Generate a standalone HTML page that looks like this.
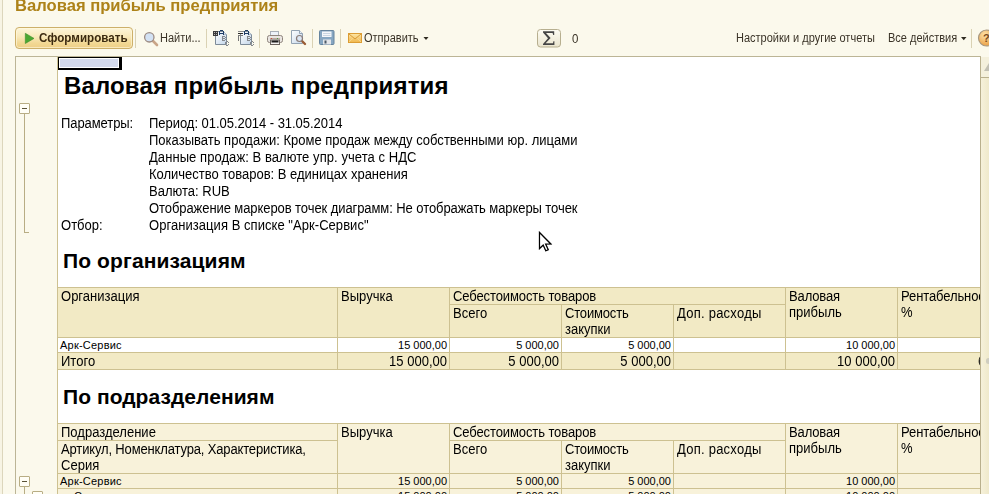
<!DOCTYPE html>
<html><head><meta charset="utf-8">
<style>
html,body{margin:0;padding:0;overflow:hidden;}
body{width:989px;height:494px;overflow:hidden;position:relative;background:#fbf9ec;font-family:"Liberation Sans",sans-serif;font-size:13px;color:#000;}
.abs{position:absolute;white-space:nowrap;}
.t13{font-size:14px;line-height:17px;transform:scaleX(0.93);transform-origin:0 0;}
.num.t13{transform-origin:100% 0;}
.t11{font-size:11px;line-height:15px;}
.l16{line-height:16px;}
.hl{position:absolute;height:1px;background:#cdc191;}
.vl{position:absolute;width:1px;background:#cdc191;}
.bg1{position:absolute;background:#f2eac5;}
.bg2{position:absolute;background:#f8f2da;}
.num{position:absolute;text-align:right;white-space:nowrap;}
.tb{font-size:12px;color:#3a3327;position:absolute;white-space:nowrap;line-height:14px;transform:scaleX(0.917);transform-origin:0 0;}
.sep{position:absolute;width:1px;height:19px;top:29px;background:#dad2b4;}
.tog{position:absolute;width:9px;height:9px;border:1px solid #b8ad84;background:#fffef6;border-radius:1px;}
.tog:after{content:"";position:absolute;left:2px;top:4px;width:5px;height:1px;background:#5a5238;}
.tl{position:absolute;background:#b8ad84;}
svg{position:absolute;overflow:visible;}
</style></head><body>
<!-- window left edge -->
<div class="abs" style="left:0;top:0;width:2px;height:494px;background:#f7f4e4"></div><div class="abs" style="left:2px;top:0;width:1px;height:494px;background:#dcd6bc"></div>
<!-- title -->
<div class="abs" style="left:15px;top:-4px;font-size:16px;font-weight:bold;color:#ad8218;line-height:20px;transform:scaleX(1.037);transform-origin:0 0;">Валовая прибыль предприятия</div>

<!-- toolbar -->
<div id="tbar">
<div class="abs" style="left:15px;top:27px;width:116px;height:20px;border:1px solid #cdb06a;border-radius:4px;background:linear-gradient(#fdf5d9,#f8e8b8 45%,#f2d894 75%,#eecf86);box-shadow:inset 0 0 0 1px rgba(255,250,225,0.6);"></div>
<svg style="left:25px;top:33px" width="10" height="12"><polygon points="0.3,0.3 9,5.4 0.3,10.5" fill="#4aa832" stroke="#3c8c2a" stroke-width="0.6"/></svg>
<div class="tb" style="left:39px;top:31px;font-weight:bold;color:#3b2a10;font-size:12.3px;transform:scaleX(0.945)">Сформировать</div>
<div class="sep" style="left:135px"></div>
<div class="tb" style="left:160px;top:31px;">Найти...</div>
<div class="sep" style="left:206px"></div>
<div class="sep" style="left:259px"></div>
<div class="sep" style="left:312px"></div>
<div class="sep" style="left:340px"></div>
<div class="tb" style="left:364px;top:31px;">Отправить</div>
<div class="tb" style="left:572px;top:32px;font-size:12.5px;">0</div>
<div class="tb" style="left:736px;top:31px;">Настройки и другие отчеты</div>
<div class="tb" style="left:888px;top:31px;">Все действия</div>
<div class="sep" style="left:971px"></div>
</div>


<!-- icons -->
<svg id="icons" style="left:0;top:0" width="989" height="60" shape-rendering="auto" font-family="Liberation Sans, sans-serif">
<defs>
<linearGradient id="pg" x1="0" y1="0" x2="1" y2="1"><stop offset="0" stop-color="#ffffff"/><stop offset="1" stop-color="#c3d6ea"/></linearGradient>
<linearGradient id="env" x1="0" y1="0" x2="0" y2="1"><stop offset="0" stop-color="#fde7a6"/><stop offset="1" stop-color="#efb64c"/></linearGradient>
<linearGradient id="sg" x1="0" y1="0" x2="0" y2="1"><stop offset="0" stop-color="#fdfcf4"/><stop offset="1" stop-color="#e9e4cd"/></linearGradient>
<radialGradient id="hg" cx="0.4" cy="0.3" r="0.8"><stop offset="0" stop-color="#fde1a8"/><stop offset="1" stop-color="#e7983a"/></radialGradient>
</defs>
<!-- magnifier (find) -->
<line x1="153" y1="41" x2="157" y2="45" stroke="#c9a588" stroke-width="2.6" stroke-linecap="round"/>
<circle cx="149.3" cy="37.3" r="4.7" fill="#d3e2f4" stroke="#9c8c84" stroke-width="1.3"/>
<!-- icon 1: copy ABC grid -->
<g id="ic1"><path d="M215.5 33 V44.5 H226.5 V34.5 L223.5 31.5 H218" fill="url(#pg)" stroke="#7d8b98" stroke-width="1"/><path d="M223.5 31.5 V34.5 H226.5" fill="#dfe9f3" stroke="#9fb0c0" stroke-width="0.8"/><rect x="213" y="31" width="5" height="5" fill="#b8b8b8"/><rect x="213" y="31" width="5" height="1" fill="#3a3a3a"/><rect x="213" y="32" width="1" height="1" fill="#3a3a3a"/><rect x="215" y="32" width="1" height="1" fill="#3a3a3a"/><rect x="217" y="32" width="1" height="1" fill="#3a3a3a"/><rect x="213" y="33" width="5" height="1" fill="#3a3a3a"/><rect x="213" y="34" width="1" height="1" fill="#3a3a3a"/><rect x="215" y="34" width="1" height="1" fill="#3a3a3a"/><rect x="217" y="34" width="1" height="1" fill="#3a3a3a"/><rect x="213" y="35" width="5" height="1" fill="#3a3a3a"/><rect x="220" y="30" width="3" height="1" fill="#1f3d66"/><rect x="219" y="31" width="1" height="1" fill="#1f3d66"/><rect x="223" y="31" width="1" height="1" fill="#1f3d66"/><rect x="219" y="32" width="1" height="1" fill="#1f3d66"/><rect x="223" y="32" width="1" height="1" fill="#1f3d66"/><rect x="219" y="33" width="5" height="1" fill="#1f3d66"/><rect x="219" y="34" width="1" height="1" fill="#1f3d66"/><rect x="223" y="34" width="1" height="1" fill="#1f3d66"/><rect x="222" y="36" width="3" height="1" fill="#85888c"/><rect x="222" y="37" width="1" height="1" fill="#85888c"/><rect x="225" y="37" width="1" height="1" fill="#85888c"/><rect x="222" y="38" width="3" height="1" fill="#85888c"/><rect x="222" y="39" width="1" height="1" fill="#85888c"/><rect x="225" y="39" width="1" height="1" fill="#85888c"/><rect x="222" y="40" width="3" height="1" fill="#85888c"/><rect x="226" y="41" width="2" height="1" fill="#85888c"/><rect x="225" y="42" width="1" height="1" fill="#85888c"/><rect x="228" y="42" width="1" height="1" fill="#85888c"/><rect x="225" y="43" width="1" height="1" fill="#85888c"/><rect x="225" y="44" width="1" height="1" fill="#85888c"/><rect x="228" y="44" width="1" height="1" fill="#85888c"/><rect x="226" y="45" width="2" height="1" fill="#85888c"/></g>
<!-- icon 2 -->
<g id="ic2"><path d="M240.5 33 V44.5 H251.5 V34.5 L248.5 31.5 H243" fill="url(#pg)" stroke="#7d8b98" stroke-width="1"/><path d="M248.5 31.5 V34.5 H251.5" fill="#dfe9f3" stroke="#9fb0c0" stroke-width="0.8"/><rect x="238" y="31" width="5" height="1" fill="#8a8a8a"/><rect x="238" y="33" width="5" height="1" fill="#2a2a2a"/><rect x="238" y="35" width="5" height="1" fill="#777"/><rect x="238" y="36" width="1" height="5" fill="#777"/><rect x="245" y="30" width="3" height="1" fill="#1f3d66"/><rect x="244" y="31" width="1" height="1" fill="#1f3d66"/><rect x="248" y="31" width="1" height="1" fill="#1f3d66"/><rect x="244" y="32" width="1" height="1" fill="#1f3d66"/><rect x="248" y="32" width="1" height="1" fill="#1f3d66"/><rect x="244" y="33" width="5" height="1" fill="#1f3d66"/><rect x="244" y="34" width="1" height="1" fill="#1f3d66"/><rect x="248" y="34" width="1" height="1" fill="#1f3d66"/><rect x="247" y="36" width="3" height="1" fill="#85888c"/><rect x="247" y="37" width="1" height="1" fill="#85888c"/><rect x="250" y="37" width="1" height="1" fill="#85888c"/><rect x="247" y="38" width="3" height="1" fill="#85888c"/><rect x="247" y="39" width="1" height="1" fill="#85888c"/><rect x="250" y="39" width="1" height="1" fill="#85888c"/><rect x="247" y="40" width="3" height="1" fill="#85888c"/><rect x="251" y="41" width="2" height="1" fill="#85888c"/><rect x="250" y="42" width="1" height="1" fill="#85888c"/><rect x="253" y="42" width="1" height="1" fill="#85888c"/><rect x="250" y="43" width="1" height="1" fill="#85888c"/><rect x="250" y="44" width="1" height="1" fill="#85888c"/><rect x="253" y="44" width="1" height="1" fill="#85888c"/><rect x="251" y="45" width="2" height="1" fill="#85888c"/></g>
<!-- printer -->
<g id="prn">
<rect x="270.5" y="31.5" width="8" height="5" fill="#eef3f9" stroke="#a9b0b8" stroke-width="1"/>
<rect x="267.5" y="35.5" width="15" height="7" rx="2" fill="#e9e5e1" stroke="#8f857d" stroke-width="1"/>
<rect x="270" y="38" width="10" height="1" fill="#b9a9a0"/>
<rect x="271" y="38" width="1" height="1" fill="#d04a3a"/><rect x="277" y="38" width="1" height="1" fill="#4aa040"/>
<rect x="270.5" y="40" width="9" height="4.5" fill="#f4f2f0" stroke="#6a625c" stroke-width="1"/>
<rect x="271.5" y="40.5" width="7" height="2" fill="#1c1c1c"/>
</g>
<!-- page preview -->
<g id="prev">
<path d="M291.5 30.5 H299.5 L302.5 33.5 V43.5 H291.5 Z" fill="url(#pg)" stroke="#93a3b3" stroke-width="1"/>
<path d="M299.5 30.5 V33.5 H302.5" fill="#eef3f8" stroke="#93a3b3" stroke-width="1"/>
<line x1="302" y1="41" x2="305" y2="44" stroke="#9a5c34" stroke-width="2.4" stroke-linecap="round"/>
<circle cx="299.5" cy="38.5" r="3" fill="#dbe6f4" stroke="#8a7c78" stroke-width="1.2"/>
</g>
<!-- floppy -->
<g id="flop">
<rect x="319.5" y="30.5" width="14.5" height="14" rx="1" fill="#86a6c2" stroke="#66849e" stroke-width="1"/>
<rect x="322" y="31.5" width="9.5" height="5.5" fill="#f3f6fa"/>
<rect x="323" y="33" width="7.5" height="1" fill="#c9d5e2"/><rect x="323" y="35" width="7.5" height="1" fill="#c9d5e2"/>
<rect x="323" y="39.5" width="8" height="5" fill="#e4e6ea"/>
<rect x="324.5" y="40.5" width="2" height="3" fill="#4a5866"/>
</g>
<!-- envelope -->
<g id="envl">
<rect x="348.5" y="33.5" width="13" height="9" fill="url(#env)" stroke="#dc9d34" stroke-width="1"/>
<path d="M349 34 L355 39 L361 34" fill="none" stroke="#d89a36" stroke-width="1"/>
<path d="M349 42 L353 38 M361 42 L357 38" fill="none" stroke="#f7d689" stroke-width="1"/>
</g>
<polygon points="423.5,37 428.5,37 426,40" fill="#2e2a20"/>
<!-- sigma button -->
<rect x="537.5" y="29.5" width="23" height="17.5" rx="3" fill="url(#sg)" stroke="#b7af8f" stroke-width="1"/>
<path d="M543 31.3 H554.2 V35 H553.2 L552.6 32.9 H546 L550.6 38 L545.6 43.2 H553 L553.4 41.2 H554.4 V44.9 H543 V44 L548 38.2 L543 32.4 Z" fill="#454545"/>
<polygon points="961,37 966.5,37 963.75,40.3" fill="#2e2a20"/>
<!-- help -->
<circle cx="986.5" cy="38" r="8" fill="url(#hg)" stroke="#a89880" stroke-width="1.2"/>
<text x="983" y="42" font-size="11" font-weight="bold" fill="#7a4a20">?</text>
</svg>

<!-- document area -->
<div class="abs" style="left:15px;top:56px;width:965px;height:438px;background:#fff;border-left:1px solid #bcb596;border-top:1px solid #bcb596;"></div>
<div class="abs" style="left:16px;top:57px;width:41px;height:437px;background:#fbf9ec;"></div>
<div class="abs" style="left:57px;top:57px;width:1px;height:437px;background:#cdc191;"></div>

<!-- selection -->
<div class="abs" style="left:58px;top:57px;width:60px;height:10px;border:solid #000;border-width:1px 3px 2px 1px;background:#d3d9ec;box-shadow:inset 0 0 0 1px #fff;"></div>

<!-- doc text -->
<div class="abs" style="left:64px;top:72px;font-size:24px;font-weight:bold;line-height:28px;letter-spacing:0.14px;">Валовая прибыль предприятия</div>
<div class="abs t13" style="left:61px;top:115px;letter-spacing:-0.1px;">Параметры:</div>
<div class="abs t13" style="left:149px;top:115px;letter-spacing:-0.05px;">Период: 01.05.2014 - 31.05.2014</div>
<div class="abs t13" style="left:149px;top:132px;">Показывать продажи: Кроме продаж между собственными юр. лицами</div>
<div class="abs t13" style="left:149px;top:149px;letter-spacing:0.06px;">Данные продаж: В валюте упр. учета с НДС</div>
<div class="abs t13" style="left:149px;top:166px;letter-spacing:-0.025px;">Количество товаров: В единицах хранения</div>
<div class="abs t13" style="left:149px;top:183px;">Валюта: RUB</div>
<div class="abs t13" style="left:149px;top:200px;letter-spacing:-0.094px;">Отображение маркеров точек диаграмм: Не отображать маркеры точек</div>
<div class="abs t13" style="left:61px;top:217px;">Отбор:</div>
<div class="abs t13" style="left:149px;top:217px;letter-spacing:0.044px;">Организация В списке "Арк-Сервис"</div>
<div class="abs" style="left:63px;top:248px;font-size:21px;font-weight:bold;line-height:26px;letter-spacing:0.12px;">По организациям</div>
<div class="abs" style="left:63px;top:384px;font-size:21px;font-weight:bold;line-height:26px;letter-spacing:0.05px;">По подразделениям</div>

<!-- TABLE 1 -->
<div id="t1">
<div class="bg1" style="left:58px;top:288px;width:922px;height:49px;"></div>
<div class="bg1" style="left:58px;top:353px;width:922px;height:16px;"></div>
<div class="hl" style="left:57px;top:287px;width:923px;"></div>
<div class="hl" style="left:449px;top:304px;width:337px;"></div>
<div class="hl" style="left:57px;top:337px;width:923px;"></div>
<div class="hl" style="left:57px;top:352px;width:923px;"></div>
<div class="hl" style="left:57px;top:369px;width:923px;"></div>
<div class="vl" style="left:337px;top:287px;height:83px;"></div>
<div class="vl" style="left:449px;top:287px;height:83px;"></div>
<div class="vl" style="left:561px;top:304px;height:66px;"></div>
<div class="vl" style="left:673px;top:304px;height:66px;"></div>
<div class="vl" style="left:785px;top:287px;height:83px;"></div>
<div class="vl" style="left:897px;top:287px;height:83px;"></div>
<div class="abs t13" style="left:61px;top:288px;">Организация</div>
<div class="abs t13" style="left:341px;top:288px;">Выручка</div>
<div class="abs t13" style="left:453px;top:288px;letter-spacing:-0.12px;">Себестоимость товаров</div>
<div class="abs t13" style="left:453px;top:305px;">Всего</div>
<div class="abs t13 l16" style="left:565px;top:305px;"><span style="letter-spacing:-0.2px">Стоимость</span><br>закупки</div>
<div class="abs t13" style="left:677px;top:305px;letter-spacing:0.25px;">Доп. расходы</div>
<div class="abs t13 l16" style="left:789px;top:288px;"><span style="letter-spacing:-0.15px">Валовая</span><br>прибыль</div>
<div class="abs t13 l16" style="left:901px;top:288px;width:85px;overflow:hidden;"><span style="letter-spacing:-0.12px">Рентабельность,</span><br>%</div>
<div class="abs t11" style="left:60px;top:338px;letter-spacing:0.22px;">Арк-Сервис</div>
<div class="num t11" style="left:338px;top:338px;width:109px;">15 000,00</div>
<div class="num t11" style="left:450px;top:338px;width:109px;">5 000,00</div>
<div class="num t11" style="left:562px;top:338px;width:109px;">5 000,00</div>
<div class="num t11" style="left:786px;top:338px;width:109px;">10 000,00</div>
<div class="abs t13" style="left:61px;top:353px;">Итого</div>
<div class="num t13" style="left:338px;top:353px;width:109px;">15 000,00</div>
<div class="num t13" style="left:450px;top:353px;width:109px;">5 000,00</div>
<div class="num t13" style="left:562px;top:353px;width:109px;">5 000,00</div>
<div class="num t13" style="left:786px;top:353px;width:109px;">10 000,00</div>
<div class="abs t13" style="left:978px;top:353px;width:2.2px;overflow:hidden;">66,67</div>
</div>

<!-- TABLE 2 -->
<div id="t2">
<div class="bg2" style="left:58px;top:424px;width:922px;height:70px;"></div>
<div class="hl" style="left:57px;top:423px;width:923px;"></div>
<div class="hl" style="left:57px;top:440px;width:281px;"></div><div class="hl" style="left:449px;top:440px;width:337px;"></div>
<div class="hl" style="left:57px;top:473px;width:923px;"></div>
<div class="hl" style="left:57px;top:488px;width:923px;"></div>
<div class="vl" style="left:337px;top:423px;height:71px;"></div>
<div class="vl" style="left:449px;top:423px;height:71px;"></div>
<div class="vl" style="left:561px;top:440px;height:54px;"></div>
<div class="vl" style="left:673px;top:440px;height:54px;"></div>
<div class="vl" style="left:785px;top:423px;height:71px;"></div>
<div class="vl" style="left:897px;top:423px;height:71px;"></div>
<div class="abs t13" style="left:61px;top:424px;">Подразделение</div>
<div class="abs t13 l16" style="left:61px;top:441px;"><span style="letter-spacing:-0.17px">Артикул, Номенклатура, Характеристика,</span><br>Серия</div>
<div class="abs t13" style="left:341px;top:424px;">Выручка</div>
<div class="abs t13" style="left:453px;top:424px;letter-spacing:-0.12px;">Себестоимость товаров</div>
<div class="abs t13" style="left:453px;top:441px;">Всего</div>
<div class="abs t13 l16" style="left:565px;top:441px;"><span style="letter-spacing:-0.2px">Стоимость</span><br>закупки</div>
<div class="abs t13" style="left:677px;top:441px;letter-spacing:0.25px;">Доп. расходы</div>
<div class="abs t13 l16" style="left:789px;top:424px;"><span style="letter-spacing:-0.15px">Валовая</span><br>прибыль</div>
<div class="abs t13 l16" style="left:901px;top:424px;width:85px;overflow:hidden;"><span style="letter-spacing:-0.12px">Рентабельность,</span><br>%</div>
<div class="abs t11" style="left:60px;top:474px;letter-spacing:0.22px;">Арк-Сервис</div>
<div class="num t11" style="left:338px;top:474px;width:109px;">15 000,00</div>
<div class="num t11" style="left:450px;top:474px;width:109px;">5 000,00</div>
<div class="num t11" style="left:562px;top:474px;width:109px;">5 000,00</div>
<div class="num t11" style="left:786px;top:474px;width:109px;">10 000,00</div>
<div class="abs t11" style="left:74px;top:489px;">Склад</div>
<div class="num t11" style="left:338px;top:489px;width:109px;">15 000,00</div>
<div class="num t11" style="left:450px;top:489px;width:109px;">5 000,00</div>
<div class="num t11" style="left:562px;top:489px;width:109px;">5 000,00</div>
<div class="num t11" style="left:786px;top:489px;width:109px;">10 000,00</div>
</div>

<!-- tree gutter -->
<div id="tree">
<div class="tl" style="left:24px;top:113px;width:1px;height:120px;"></div>
<div class="tl" style="left:24px;top:232px;width:5px;height:1px;"></div>
<div class="tog" style="left:19px;top:103px;"></div>
<div class="tl" style="left:24px;top:487px;width:1px;height:7px;"></div>
<div class="tog" style="left:19px;top:476px;"></div>
<div class="tog" style="left:32px;top:491px;"></div>
</div>

<!-- scrollbar -->
<div id="sb">
<div class="abs" style="left:980px;top:57px;width:9px;height:437px;background:linear-gradient(90deg,#f6f1da,#efe9cb);border-left:1px solid #b9b08d;box-sizing:border-box;"></div>
<div class="abs" style="left:981px;top:57px;width:8px;height:20px;background:#f4f0dc;border-bottom:1px solid #b9b08d;"></div>
<svg style="left:984px;top:63px" width="6" height="8"><polygon points="0,8 5,0 5,8" fill="#c2c0b3"/></svg>
</div>

<!-- cursor -->
<svg style="left:538px;top:231px;filter:drop-shadow(0 0 0.6px rgba(0,0,0,0.55))" width="16" height="22"><path d="M1.5 1.5 V17.5 L5.2 14 L7.8 19.8 L10.2 18.7 L7.6 13 H12.8 Z" fill="#fff" stroke="#000" stroke-width="1.2" stroke-linejoin="miter"/></svg>
<div class="abs" style="left:986px;top:358px;width:5px;height:6px;border-radius:3px;background:#cfcdbf;"></div>
</body></html>
